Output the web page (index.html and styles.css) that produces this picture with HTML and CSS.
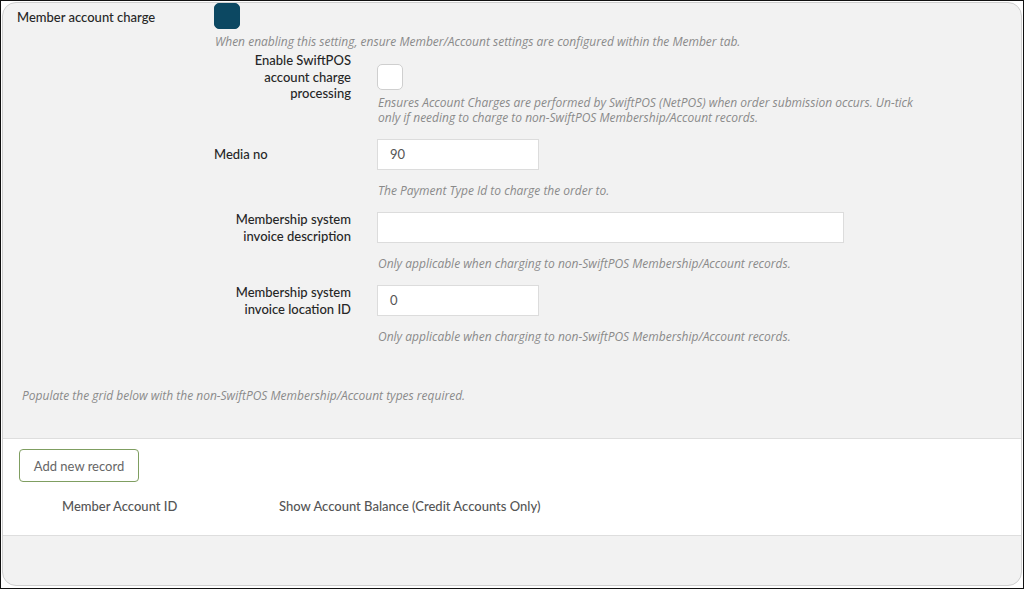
FILE: index.html
```html
<!DOCTYPE html>
<html lang="en">
<head>
<meta charset="utf-8">
<title>Member account charge</title>
<link rel="stylesheet" href="styles.css">
</head>
<body>
<div class="frame">
  <div class="panel">
    <div class="top-setting">
      <div class="top-label">Member account charge</div>
      <div class="top-control">
        <span class="checkbox checkbox--checked"></span>
        <p class="hint hint--check">When enabling this setting, ensure Member/Account settings are configured within the Member tab.</p>

        <div class="fields">
          <div class="field-label"><span>Enable SwiftPOS<br>account charge<br>processing</span></div>
          <div class="field-control"><span class="checkbox"></span></div>
          <p class="hint hint--check field-hint">Ensures Account Charges are performed by SwiftPOS (NetPOS) when order submission occurs. Un-tick only if needing to charge to non-SwiftPOS Membership/Account records.</p>

          <div class="field-label field-label--left"><span>Media no</span></div>
          <div class="field-control"><div class="input input--short">90</div></div>
          <p class="hint hint--input field-hint">The Payment Type Id to charge the order to.</p>

          <div class="field-label"><span>Membership system<br>invoice description</span></div>
          <div class="field-control"><div class="input input--wide"></div></div>
          <p class="hint hint--input field-hint">Only applicable when charging to non-SwiftPOS Membership/Account records.</p>

          <div class="field-label"><span>Membership system<br>invoice location ID</span></div>
          <div class="field-control"><div class="input input--short">0</div></div>
          <p class="hint hint--input field-hint">Only applicable when charging to non-SwiftPOS Membership/Account records.</p>
        </div>
      </div>
    </div>

    <p class="hint grid-intro">Populate the grid below with the non-SwiftPOS Membership/Account types required.</p>

    <div class="grid-section">
      <button class="btn-add" type="button">Add new record</button>
      <div class="grid-header">
        <div class="col col--id">Member Account ID</div>
        <div class="col">Show Account Balance (Credit Accounts Only)</div>
      </div>
    </div>
  </div>
</div>
</body>
</html>
```

FILE: styles.css
```css
* { box-sizing: border-box; }

html, body {
  margin: 0;
  padding: 0;
  background: #fff;
}

body {
  font-family: "Lato", "Liberation Sans", sans-serif;
  color: #333;
}

.frame {
  width: 1024px;
  height: 589px;
  border: 1px solid #111;
  padding: 1px 1px 2px 1px;
  background: #fff;
}

.panel {
  height: 100%;
  background: #f2f2f2;
  border: 1px solid #cfcfcf;
  border-radius: 14px;
  overflow: hidden;
}

.top-setting {
  display: grid;
  grid-template-columns: 197px 1fr;
  padding: 0 0 0 14px;
}

.top-label {
  font-size: 13px;
  font-weight: 500;
  line-height: 16px;
  padding-top: 6px;
  color: #262626;
}

.top-control {
  display: flex;
  flex-direction: column;
  align-items: flex-start;
}

.checkbox {
  display: block;
  width: 26px;
  height: 26px;
  border-radius: 5px;
  border: 1px solid #cfcfcf;
  background: #fff;
}

.checkbox--checked {
  background: #0c4862;
  border-color: #0c4862;
}

.hint {
  margin: 0;
  font-family: "Open Sans", "Lato", sans-serif;
  font-size: 12px;
  line-height: 15px;
  font-style: italic;
  color: #8a8a8a;
}

.hint--check { margin-top: 5px; }
.hint--input { margin-top: 13px; }

.top-control > .hint--check {
  margin-left: 1px;
}

.fields {
  display: grid;
  grid-template-columns: 137px 1fr;
  column-gap: 26px;
  margin-top: 15px;
  width: 100%;
}

.field-label {
  grid-column: 1;
  align-self: center;
  height: 0;
  display: flex;
  align-items: center;
  justify-content: flex-end;
  text-align: right;
  font-size: 13px;
  font-weight: 500;
  line-height: 16.5px;
  color: #262626;
}

.field-label--left {
  justify-content: flex-start;
  text-align: left;
}

.field-control {
  grid-column: 2;
  display: flex;
  align-items: center;
}

.field-hint {
  grid-column: 2;
  max-width: 548px;
  margin-bottom: 14px;
  padding-left: 1px;
}

.input {
  height: 31px;
  background: #fff;
  border: 1px solid #dcdcdc;
  font-size: 13px;
  line-height: 29px;
  padding: 0 12px;
  color: #555;
}

.input--short { width: 162px; }
.input--wide { width: 467px; }

.grid-intro {
  margin: 30px 0 0 19px;
}

.grid-section {
  margin-top: 35px;
  background: #fff;
  border-top: 1px solid #dedede;
  border-bottom: 1px solid #dedede;
  padding: 10px 0 0 16px;
  height: 98px;
}

.btn-add {
  display: block;
  width: 120px;
  height: 33px;
  background: #fff;
  border: 1px solid #7f9e61;
  border-radius: 4px;
  font-family: inherit;
  font-size: 13px;
  color: #666;
  padding: 0;
  cursor: pointer;
}

.grid-header {
  display: flex;
  margin-top: 16px;
  font-size: 13px;
  line-height: 16px;
  color: #555;
  font-weight: 500;
}

.col--id {
  padding-left: 43px;
  width: 260px;
}
```
